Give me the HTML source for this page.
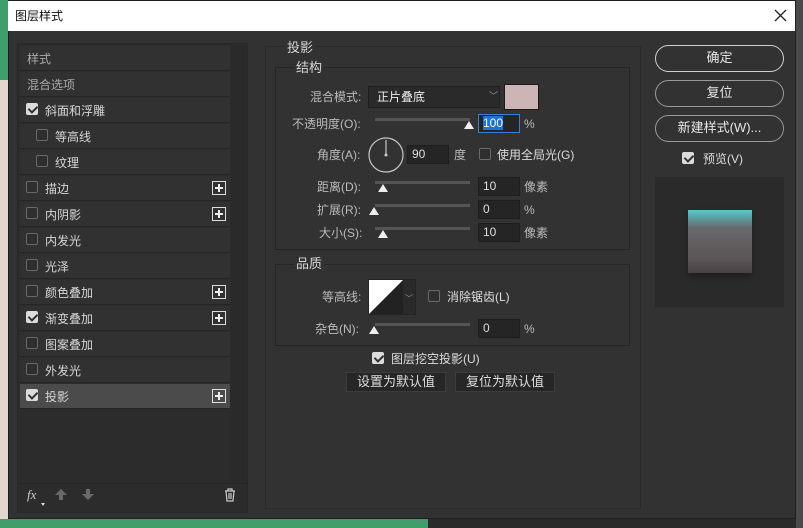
<!DOCTYPE html>
<html><head><meta charset="utf-8"><style>
*{margin:0;padding:0;box-sizing:border-box}
body{width:803px;height:528px;overflow:hidden;background:#2a2a2a;position:relative;font-family:"Liberation Sans","Noto Sans CJK SC",sans-serif;font-size:12px;color:#d6d6d6}
.a{position:absolute}
.t{position:absolute;white-space:nowrap;line-height:14px}
.cb{position:absolute;width:12px;height:12px;border:1px solid #6a6a6a;border-radius:2px;background:#2e2e2e}
.cb.on{background:#dcdcdc;border-color:#dcdcdc}
.cb.on::after{content:"";position:absolute;left:3px;top:0px;width:4px;height:7px;border:solid #333;border-width:0 2px 2px 0;transform:rotate(45deg)}
.row{position:absolute;left:20px;width:210px;height:25px;border-bottom:1px solid #262626;background:#313131}
.row .t{top:6px}
.plus{position:absolute;right:4px;top:5px;width:14px;height:14px;border:1px solid #ddd}
.plus::before{content:"";position:absolute;left:2px;top:5px;width:8px;height:2px;background:#eee}
.plus::after{content:"";position:absolute;left:5px;top:2px;width:2px;height:8px;background:#eee}
.inp{position:absolute;height:19px;background:#252525;border:1px solid #1e1e1e;color:#ddd;padding-left:4px;line-height:17px;font-size:12px}
.sl{position:absolute;height:3px;background:#555}
.th{position:absolute;width:0;height:0;border-left:5px solid transparent;border-right:5px solid transparent;border-bottom:8px solid #eee}
.btn{position:absolute;left:655px;width:129px;height:27px;border:1.5px solid #9a9a9a;border-radius:14px;text-align:center;line-height:24px;font-size:13px;color:#e6e6e6}
.gb{position:absolute;border:1px solid #262626}
.sb{position:absolute;height:20px;background:#262626;border:1px solid #3c3c3c;text-align:center;line-height:18px;font-size:13px;color:#ddd}
</style></head><body>
<div class="a" style="left:0;top:0;width:8px;height:80px;background:#3f9e69"></div>
<div class="a" style="left:0;top:80px;width:8px;height:440px;background:#e4d6cf"></div>
<div class="a" style="left:0;top:519px;width:428px;height:9px;background:#3f9e69"></div>
<div class="a" style="left:796px;top:0;width:7px;height:528px;background:#4a4a4a"></div>
<div class="a" style="left:8px;top:0;width:788px;height:519px;background:#323232;border:1px solid #1f1f1f"></div>
<div class="a" style="left:8px;top:1px;width:787px;height:30px;background:#fff"></div>
<div class="t" style="left:15px;top:9px;color:#111;font-size:12px">图层样式</div>
<svg class="a" style="left:774px;top:9px" width="13" height="13"><path d="M1 1L12 12M12 1L1 12" stroke="#222" stroke-width="1.3"/></svg>

<!-- left list -->
<div class="a" style="left:17px;top:43px;width:231px;height:470px;border:1px solid #282828;background:#2c2c2c"></div>
<div class="a" style="left:231px;top:45px;width:15px;height:437px;background:#2a2a2a"></div>
<div class="row" style="top:46px"><div class="t" style="left:7px;color:#aaa">样式</div></div>
<div class="row" style="top:72px"><div class="t" style="left:7px;color:#aaa">混合选项</div></div>
<div class="row" style="top:98px"><div class="cb on" style="left:6px;top:5px"></div><div class="t" style="left:25px">斜面和浮雕</div></div>
<div class="row" style="top:124px"><div class="cb" style="left:16px;top:5px"></div><div class="t" style="left:35px">等高线</div></div>
<div class="row" style="top:150px"><div class="cb" style="left:16px;top:5px"></div><div class="t" style="left:35px">纹理</div></div>
<div class="row" style="top:176px"><div class="cb" style="left:6px;top:5px"></div><div class="t" style="left:25px">描边</div><div class="plus"></div></div>
<div class="row" style="top:202px"><div class="cb" style="left:6px;top:5px"></div><div class="t" style="left:25px">内阴影</div><div class="plus"></div></div>
<div class="row" style="top:228px"><div class="cb" style="left:6px;top:5px"></div><div class="t" style="left:25px">内发光</div></div>
<div class="row" style="top:254px"><div class="cb" style="left:6px;top:5px"></div><div class="t" style="left:25px">光泽</div></div>
<div class="row" style="top:280px"><div class="cb" style="left:6px;top:5px"></div><div class="t" style="left:25px">颜色叠加</div><div class="plus"></div></div>
<div class="row" style="top:306px"><div class="cb on" style="left:6px;top:5px"></div><div class="t" style="left:25px">渐变叠加</div><div class="plus"></div></div>
<div class="row" style="top:332px"><div class="cb" style="left:6px;top:5px"></div><div class="t" style="left:25px">图案叠加</div></div>
<div class="row" style="top:358px"><div class="cb" style="left:6px;top:5px"></div><div class="t" style="left:25px">外发光</div></div>
<div class="row" style="top:384px;background:#4b4b4b"><div class="cb on" style="left:6px;top:5px"></div><div class="t" style="left:25px">投影</div><div class="plus"></div></div>
<div class="a" style="left:19px;top:483px;width:228px;height:1px;background:#262626"></div>
<div class="t" style="left:27px;top:488px;font-style:italic;font-size:13px;color:#ccc;font-family:'Liberation Serif',serif">fx</div>
<div class="a" style="left:41px;top:503px;border-left:2px solid transparent;border-right:2px solid transparent;border-top:3px solid #ddd"></div>
<svg class="a" style="left:54px;top:488px" width="14" height="13"><path d="M7 1L1 7h4v5h4V7h4z" fill="#6a6a6a"/></svg>
<svg class="a" style="left:81px;top:488px" width="14" height="13"><path d="M7 12L1 6h4V1h4v5h4z" fill="#6a6a6a"/></svg>
<svg class="a" style="left:224px;top:488px" width="12" height="14" viewBox="0 0 12 14"><path d="M1 3h10M4 3V1h4v2M2 3l1 10h6l1-10M5 5v6M7 5v6" stroke="#ccc" fill="none" stroke-width="1.2"/></svg>

<!-- middle -->
<div class="gb" style="left:265px;top:46px;width:376px;height:463px;border-color:#2a2a2a"></div>
<div class="t" style="left:285px;top:41px;background:#323232;padding:0 2px;font-size:13px">投影</div>
<div class="gb" style="left:275px;top:67px;width:355px;height:183px"></div>
<div class="t" style="left:294px;top:61px;background:#323232;padding:0 2px;font-size:13px">结构</div>
<div class="t" style="left:310px;top:90px;color:#bbb">混合模式:</div>
<div class="a" style="left:368px;top:86px;width:132px;height:22px;background:#2a2a2a;border:1px solid #1f1f1f"></div>
<div class="t" style="left:377px;top:90px;color:#eee">正片叠底</div>
<div class="t" style="left:489px;top:89px;color:#999;font-size:9px">﹀</div>
<div class="a" style="left:504px;top:84px;width:35px;height:26px;background:#cdb5b5;border:1px solid #1a1a1a"></div>
<div class="t" style="left:292px;top:117px;color:#bbb">不透明度(O):</div>
<div class="sl" style="left:375px;top:118px;width:95px"></div>
<div class="th" style="left:464px;top:121px"></div>
<div class="inp" style="left:478px;top:114px;width:42px;border:1px solid #3a7dd6"><span style="background:#1b73d6;color:#fff">100</span></div>
<div class="t" style="left:524px;top:117px;color:#bbb">%</div>
<div class="t" style="left:317px;top:148px;color:#bbb">角度(A):</div>
<svg class="a" style="left:367px;top:136px" width="38" height="38"><circle cx="19" cy="19" r="17" stroke="#c8c8c8" stroke-width="1.2" fill="none"/><line x1="19" y1="19" x2="19" y2="4" stroke="#c8c8c8" stroke-width="1.2"/><circle cx="19" cy="19" r="1.5" fill="#c8c8c8"/></svg>
<div class="inp" style="left:407px;top:145px;width:42px">90</div>
<div class="t" style="left:454px;top:148px;color:#bbb">度</div>
<div class="cb" style="left:479px;top:148px"></div>
<div class="t" style="left:497px;top:148px;color:#ddd">使用全局光(G)</div>
<div class="t" style="left:317px;top:180px;color:#bbb">距离(D):</div>
<div class="sl" style="left:375px;top:181px;width:95px"></div><div class="th" style="left:378px;top:184px"></div>
<div class="inp" style="left:478px;top:177px;width:42px">10</div><div class="t" style="left:524px;top:180px;color:#bbb">像素</div>
<div class="t" style="left:317px;top:203px;color:#bbb">扩展(R):</div>
<div class="sl" style="left:375px;top:204px;width:95px"></div><div class="th" style="left:369px;top:207px"></div>
<div class="inp" style="left:478px;top:200px;width:42px">0</div><div class="t" style="left:524px;top:203px;color:#bbb">%</div>
<div class="t" style="left:319px;top:226px;color:#bbb">大小(S):</div>
<div class="sl" style="left:375px;top:227px;width:95px"></div><div class="th" style="left:378px;top:230px"></div>
<div class="inp" style="left:478px;top:223px;width:42px">10</div><div class="t" style="left:524px;top:226px;color:#bbb">像素</div>

<div class="gb" style="left:275px;top:264px;width:355px;height:82px"></div>
<div class="t" style="left:294px;top:257px;background:#323232;padding:0 2px;font-size:13px">品质</div>
<div class="t" style="left:322px;top:290px;color:#bbb">等高线:</div>
<svg class="a" style="left:368px;top:279px" width="48" height="36"><rect x="0" y="0" width="48" height="36" fill="#2a2a2a" stroke="#1f1f1f"/><rect x="1" y="1" width="34" height="34" fill="#fff"/><polygon points="1,35 35,1 35,35" fill="#222"/><text x="37" y="22" fill="#999" font-size="8">﹀</text></svg>
<div class="cb" style="left:428px;top:290px"></div>
<div class="t" style="left:447px;top:290px;color:#ddd">消除锯齿(L)</div>
<div class="t" style="left:315px;top:322px;color:#bbb">杂色(N):</div>
<div class="sl" style="left:375px;top:323px;width:95px"></div><div class="th" style="left:369px;top:326px"></div>
<div class="inp" style="left:478px;top:319px;width:42px">0</div><div class="t" style="left:524px;top:322px;color:#bbb">%</div>
<div class="cb on" style="left:372px;top:352px"></div>
<div class="t" style="left:391px;top:352px;color:#ddd">图层挖空投影(U)</div>
<div class="sb" style="left:346px;top:372px;width:100px">设置为默认值</div>
<div class="sb" style="left:455px;top:372px;width:100px">复位为默认值</div>

<!-- right -->
<div class="btn" style="top:45px;border-color:#d0d0d0">确定</div>
<div class="btn" style="top:80px">复位</div>
<div class="btn" style="top:115px">新建样式(W)...</div>
<div class="cb on" style="left:682px;top:152px"></div>
<div class="t" style="left:703px;top:152px;color:#ddd">预览(V)</div>
<div class="a" style="left:655px;top:177px;width:129px;height:130px;background:#2a2a2a"></div>
<div class="a" style="left:688px;top:213px;width:64px;height:64px;background:#1e1e1e;filter:blur(3px)"></div>
<div class="a" style="left:688px;top:210px;width:64px;height:63px;background:linear-gradient(#5cc8ca 0%,#5aa8aa 10%,#676b6d 28%,#615d5f 55%,#5a5456 80%,#4a4142 100%)"></div>
</body></html>
